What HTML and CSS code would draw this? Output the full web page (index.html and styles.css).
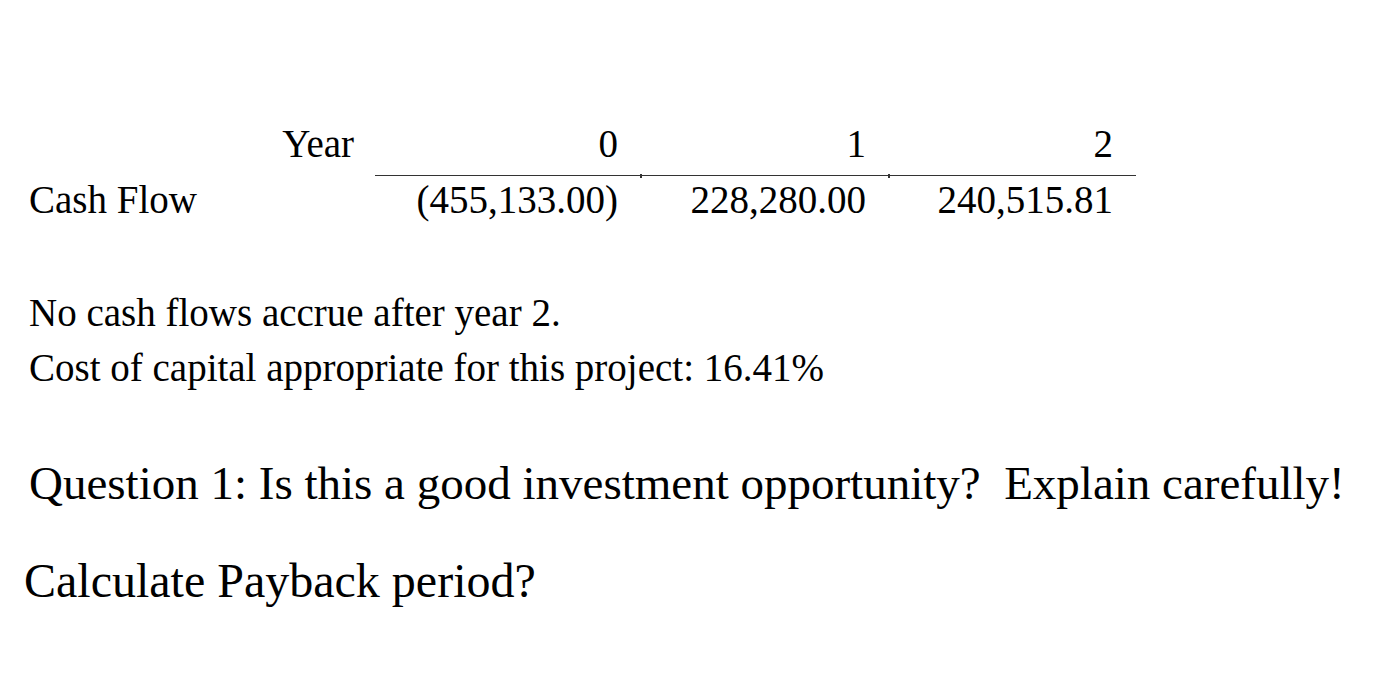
FILE: index.html
```html
<!DOCTYPE html>
<html>
<head>
<meta charset="utf-8">
<link rel="stylesheet" href="styles.css">
</head>
<body>
<div class="page">
  <div class="cf-table">
    <div class="cell label head">Year</div>
    <div class="cell num head tick">0</div>
    <div class="cell num head tick">1</div>
    <div class="cell num head">2</div>
    <div class="cell label row">Cash Flow</div>
    <div class="cell num row">(455,133.00)</div>
    <div class="cell num row">228,280.00</div>
    <div class="cell num row">240,515.81</div>
  </div>
  <div class="notes">
    <p>No cash flows accrue after year 2.</p>
    <p>Cost of capital appropriate for this project: 16.41%</p>
  </div>
  <p class="question">Question 1: Is this a good investment opportunity?&nbsp; Explain carefully!</p>
  <p class="calc">Calculate Payback period?</p>
</div>
</body>
</html>
```
FILE: styles.css
```css
html, body {
  margin: 0;
  padding: 0;
  background: #ffffff;
}
body {
  font-family: "Liberation Serif", "Times New Roman", serif;
  color: #000;
}
.page {
  padding: 122px 0 0 29px;
}
.cf-table {
  display: grid;
  grid-template-columns: 346px 266px 248px 247px;
  font-size: 39px;
  line-height: 44px;
}
.cell {
  white-space: nowrap;
}
.cell.row {
  padding-top: 2px;
}
.cell.label.head {
  text-align: right;
  padding-right: 21px;
}
.cell.label.row {
  text-align: left;
}
.cell.num {
  text-align: right;
  padding-right: 23px;
}
.cell.num.head {
  padding-bottom: 9px;
  border-bottom: 1.5px solid #333;
  position: relative;
}
.cell.tick::after {
  content: "";
  position: absolute;
  right: -1px;
  bottom: -3px;
  width: 2px;
  height: 4.5px;
  background: #333;
}
.notes {
  margin-top: 63px;
  font-size: 39px;
  line-height: 55px;
}
.notes p {
  margin: 0;
}
.question {
  margin: 58px 0 0 0;
  font-size: 47px;
  line-height: 60px;
  white-space: nowrap;
}
.calc {
  margin: 38px 0 0 -5px;
  font-size: 48px;
  line-height: 60px;
  white-space: nowrap;
}
```
